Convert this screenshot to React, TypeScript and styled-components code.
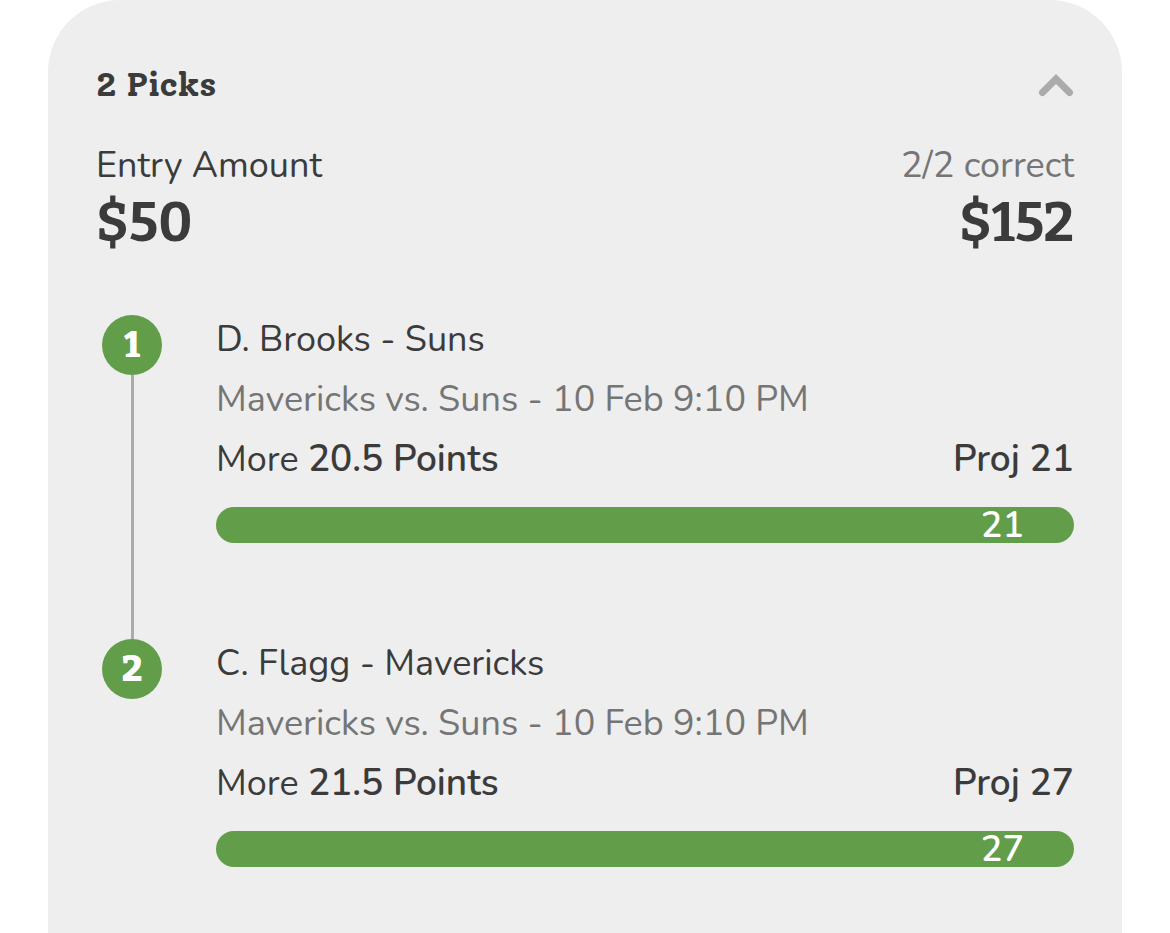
import React, { useState } from "react";
import styled, { createGlobalStyle } from "styled-components";

const GlobalStyle = createGlobalStyle`
  *, *::before, *::after { box-sizing: border-box; }
  body {
    margin: 0;
    background: #ffffff;
    color: #3b3b3b;
    font-family: Nunito, Lato, sans-serif;
    font-size: 36px;
  }
`;

const Card = styled.main`
  min-height: 100vh;
  margin: 0 48px;
  padding: 60px 48px 48px;
  background: #eeeeee;
  border-radius: 72px 72px 0 0;
`;

const Header = styled.header`
  display: flex;
  align-items: center;
  justify-content: space-between;
`;

const Title = styled.h1`
  margin: 0;
  font-family: Solway, Lato, sans-serif;
  font-size: 34px;
  font-weight: 700;
  line-height: 50px;
`;

const Toggle = styled.button`
  display: flex;
  padding: 0;
  border: 0;
  background: none;
  color: #ababab;
  cursor: pointer;
`;

const Summary = styled.dl`
  display: flex;
  justify-content: space-between;
  margin: 31px 0 60px;
`;

const Figure = styled.div<{ $end?: boolean }>`
  text-align: ${(p) => (p.$end ? "right" : "left")};
`;

const Label = styled.dt<{ $muted?: boolean }>`
  line-height: 50px;
  color: ${(p) => (p.$muted ? "#757575" : "inherit")};
`;

const Amount = styled.dd`
  margin: 0;
  font-family: Bitter, Lato, sans-serif;
  font-size: 54px;
  font-weight: 700;
  line-height: 64px;
`;

const PickList = styled.ol`
  margin: 0;
  padding: 0;
  list-style: none;
`;

const Pick = styled.li`
  display: flex;
  gap: 48px;
`;

const Rail = styled.div`
  display: flex;
  flex: 0 0 72px;
  flex-direction: column;
  align-items: center;
`;

const Marker = styled.span`
  display: flex;
  justify-content: center;
  width: 60px;
  height: 60px;
  border-radius: 50%;
  background: #629d4a;
  color: #ffffff;
  font-family: Bitter, Lato, sans-serif;
  font-size: 36px;
  font-weight: 800;
  line-height: 60px;
`;

const Connector = styled.span`
  flex: 1;
  width: 3px;
  background: #ababab;
`;

const Details = styled.div<{ $last: boolean }>`
  display: flex;
  flex: 1;
  flex-direction: column;
  gap: 10px;
  min-width: 0;
  padding-bottom: ${(p) => (p.$last ? 0 : 96)}px;
`;

const Line = styled.p<{ $muted?: boolean }>`
  display: flex;
  align-items: baseline;
  justify-content: space-between;
  height: 50px;
  margin: 0;
  line-height: 50px;
  color: ${(p) => (p.$muted ? "#757575" : "inherit")};
`;

const Strong = styled.strong`
  font-size: 37px;
  font-weight: 600;
  line-height: 48px;
`;

const Bar = styled.div`
  display: flex;
  justify-content: flex-end;
  height: 36px;
  margin-top: 12px;
  padding-right: 50px;
  border-radius: 18px;
  background: #629d4a;
  color: #ffffff;
  font-weight: 600;
  line-height: 38px;
`;

const picks = [
  { player: "D. Brooks - Suns", game: "Mavericks vs. Suns - 10 Feb 9:10 PM", line: "20.5 Points", result: 21 },
  { player: "C. Flagg - Mavericks", game: "Mavericks vs. Suns - 10 Feb 9:10 PM", line: "21.5 Points", result: 27 },
];

export default function App() {
  const [open, setOpen] = useState(true);
  return (
    <>
      <GlobalStyle />
      <Card>
        <Header>
          <Title>2 Picks</Title>
          <Toggle type="button" aria-label="Toggle picks" aria-expanded={open} onClick={() => setOpen(!open)}>
            <svg width="36" height="24" viewBox="0 0 36 24" fill="none" stroke="currentColor" strokeWidth="7" strokeLinecap="round">
              <path d="M4.500 19.500 18 6 31.500 19.500" />
            </svg>
          </Toggle>
        </Header>
        <Summary>
          <Figure>
            <Label>Entry Amount</Label>
            <Amount>$50</Amount>
          </Figure>
          <Figure $end>
            <Label $muted>2/2 correct</Label>
            <Amount>$152</Amount>
          </Figure>
        </Summary>
        {open && (
          <PickList>
            {picks.map((pick, i) => {
              const last = i === picks.length - 1;
              return (
                <Pick key={pick.player}>
                  <Rail>
                    <Marker>{i + 1}</Marker>
                    {!last && <Connector />}
                  </Rail>
                  <Details $last={last}>
                    <Line>{pick.player}</Line>
                    <Line $muted>{pick.game}</Line>
                    <Line>
                      <span>
                        More <Strong>{pick.line}</Strong>
                      </span>
                      <Strong>Proj {pick.result}</Strong>
                    </Line>
                    <Bar>{pick.result}</Bar>
                  </Details>
                </Pick>
              );
            })}
          </PickList>
        )}
      </Card>
    </>
  );
}
